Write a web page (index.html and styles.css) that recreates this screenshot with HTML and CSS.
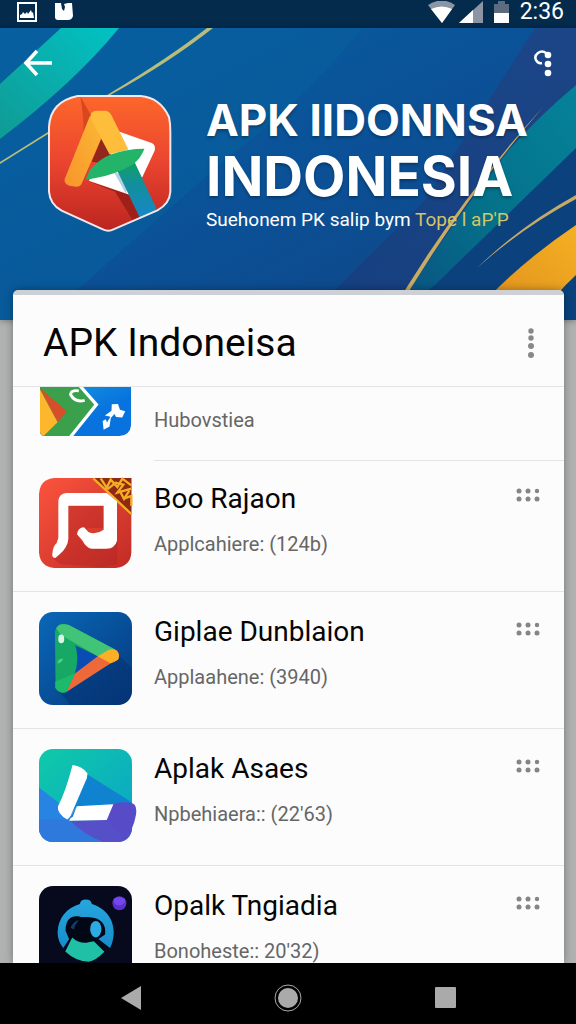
FILE: index.html
```html
<!DOCTYPE html>
<html lang="id">
<head>
  <meta charset="UTF-8" />
  <meta name="viewport" content="width=device-width, initial-scale=1.0" />
  <title>APK Indonesia</title>
  <link rel="stylesheet" href="styles.css">
</head>
<body>
  <div class="status-bar">
    <div class="status-left">
      <svg width="20" height="20" viewBox="0 0 20 20"><path d="M1 1h18v18H1z" fill="none" stroke="#fff" stroke-width="2"/><path d="M3 16v-3l2-1 1-2 2 2 2-2 1 2 3-4 1 3 1-1 1 6z" fill="#fff"/></svg>
      <svg width="20" height="20" viewBox="0 0 20 20"><path d="M1 1h6l1 6 2 2 1-4-1-3 4-1h4l1 13q-1 4-5 4H4q-3 0-3-3z" fill="#fff"/></svg>
    </div>
    <div class="status-right">
      <svg class="wifi" width="28" height="22" viewBox="0 0 28 22"><path d="M0 4Q14-5 27 4L14 22z" fill="#8b95a3"/><path d="M3 8q11-5 21 0L14 22z" fill="#fff"/></svg>
      <svg class="signal" width="24" height="22" viewBox="0 0 24 22"><path d="M0 22L24 0v22z" fill="#8b95a3"/><path d="M0 22L14 9v13z" fill="#fff"/></svg>
      <svg class="battery" width="15" height="22" viewBox="0 0 15 22"><path d="M0 3h4V0h7v3h4v9H0z" fill="#5d6b80"/><path d="M0 12h15v10H0z" fill="#fff"/></svg>
      <span class="time">2:36</span>
    </div>
  </div>

  <header class="hero">
    <svg class="hero-art" viewBox="0 28 576 292" preserveAspectRatio="none">
      <defs>
        <linearGradient id="sea" x1="0" y1="0" x2="1" y2="1"><stop offset="0" stop-color="#0661a5"/><stop offset=".5" stop-color="#0b5197"/><stop offset="1" stop-color="#104383"/></linearGradient>
        <linearGradient id="teal" x1="1" y1="0" x2="0" y2="1"><stop offset="0" stop-color="#02c2c4"/><stop offset="1" stop-color="#109a94"/></linearGradient>
        <linearGradient id="teal2" x1="1" y1="0" x2="0" y2="1"><stop offset="0" stop-color="#05829a"/><stop offset=".5" stop-color="#04718a"/><stop offset="1" stop-color="#0b4d80"/></linearGradient>
        <linearGradient id="gold" x1="1" y1="0" x2="0" y2="1"><stop offset="0" stop-color="#f5b023"/><stop offset="1" stop-color="#dc8b1c"/></linearGradient>
        <linearGradient id="dusk" x1="1" y1="0" x2="0" y2="1"><stop offset="0" stop-color="#22407f" stop-opacity=".7"/><stop offset="1" stop-color="#183c7b" stop-opacity=".7"/></linearGradient>
      </defs>
      <path d="M0 28h576v292H0z" fill="url(#sea)"/>
      <path d="M0 28h362Q310 95 225 160L77 290v30H0z" fill="#075f9d" opacity=".65"/>
      <path d="M576 28v292H310l25-30 90-90 110-172z" fill="url(#dusk)"/>
      <path d="M61 28h58Q75 82 0 139V84z" fill="url(#teal)"/>
      <path d="M207 28h6Q170 62 112 94L0 164v-2L112 92Q170 57 207 28z" fill="#b9bd7c"/>
      <path d="M576 85v75L450 270l-40 50h-20Q440 240 508 151 537 118 576 85z" fill="url(#teal2)"/>
      <path d="M576 148v172H390l45-35z" fill="#0b427d"/>
      <path d="M543 107Q455 210 392 320l-4-1Q450 210 543 107z" fill="#c9ac62"/>
      <path d="M576 195v4Q520 229 476 269 520 226 576 195z" fill="#c6aa68"/>
      <path d="M576 225v50q-22 20-38 45h-70q44-52 108-95z" fill="url(#gold)"/>
    </svg>
    <button class="icon-btn back" aria-label="Back">
      <svg width="30" height="28" viewBox="0 0 30 28"><path d="M28 14H3M13 2L2 14l11 12" fill="none" stroke="#fff" stroke-width="3.5"/></svg>
    </button>
    <button class="icon-btn options" aria-label="Options">
      <svg width="18" height="28" viewBox="0 0 18 28"><path d="M12 3Q8 0 4 3T2 10q2 4 6 3" fill="none" stroke="#fff" stroke-width="2.5"/><g fill="#fff"><circle cx="14" cy="5" r="3.3"/><circle cx="14" cy="14" r="3.3"/><circle cx="14" cy="23" r="3.3"/></g></svg>
    </button>
    <div class="brand">
      <svg class="brand-logo" viewBox="140 282 376 416">
        <defs>
          <linearGradient id="shield" x1="0" y1="0" x2="0" y2="1"><stop offset="0" stop-color="#fd672a"/><stop offset=".5" stop-color="#ea4430"/><stop offset="1" stop-color="#bb251f"/></linearGradient>
          <linearGradient id="amber" x1="1" y1="0" x2="0" y2="1"><stop offset="0" stop-color="#fbb835"/><stop offset="1" stop-color="#f8942b"/></linearGradient>
          <linearGradient id="leg" x1="0" y1="0" x2="0" y2="1"><stop offset="0" stop-color="#10a15f"/><stop offset=".4" stop-color="#128f9c"/><stop offset="1" stop-color="#1786c9"/></linearGradient>
          <clipPath id="shieldClip"><path d="M232 287H422Q480 292 507 350 511 368 511 395V575Q509 611 472 631L340 688Q325 696 308 688L184 632Q149 613 146 575V380Q150 304 232 287z"/></clipPath>
        </defs>
        <path d="M232 287H422Q480 292 507 350 511 368 511 395V575Q509 611 472 631L340 688Q325 696 308 688L184 632Q149 613 146 575V380Q150 304 232 287z" fill="url(#shield)"/>
        <g clip-path="url(#shieldClip)">
          <path d="M240 287L272 345 250 400Q250 345 240 287z" fill="#d9471f"/>
          <path d="M268 545L386 583 420 655 400 665 345 575z" fill="#9f2019"/>
          <path d="M356 394L455 428Q468 435 464 451L428 528 386 583 266 542z" fill="#fff"/>
          <path d="M340 513L377 580 392 540z" fill="#b2cfe3"/>
          <path d="M303 415L332 463 310 490 275 485z" fill="#94271b"/>
          <path d="M270 345L303 415 245 549Q242 560 227 560L207 557Q190 550 193 537z" fill="url(#amber)"/>
          <path d="M272 340Q277 331 291 331L318 331Q329 334 335 347L385 448 328 462 272 357z" fill="#ffbd3c"/>
          <path d="M347 503L401 480 469 625 459 640 420 655z" fill="url(#leg)"/>
          <path d="M256 539L270 507Q300 475 332 463 380 446 433 446 422 476 399 492 350 523 275 536z" fill="#23b46a"/>
        </g>
        <path d="M232 287H422Q480 292 507 350 511 368 511 395V575Q509 611 472 631L340 688Q325 696 308 688L184 632Q149 613 146 575V380Q150 304 232 287z" fill="none" stroke="#f2e8ed" stroke-width="6"/>
      </svg>
      <div class="brand-text">
        <div class="brand-top">APK IIDONNSA</div>
        <div class="brand-name">INDONESIA</div>
        <div class="tagline">Suehonem PK salip bym <span>Tope l aP'P</span></div>
      </div>
    </div>
  </header>

  <main class="card">
    <div class="card-header">
      <h1>APK Indoneisa</h1>
      <button class="icon-btn" aria-label="More">
        <svg width="8" height="30" viewBox="0 0 8 30" fill="#888"><circle cx="4" cy="3" r="2.7"/><circle cx="4" cy="10" r="2.7"/><circle cx="4" cy="18" r="3"/><circle cx="4" cy="27" r="3"/></svg>
      </button>
    </div>

    <ul class="app-list">
      <li class="app partial">
        <svg class="app-icon" viewBox="117 197 279 150">
          <defs><linearGradient id="mapBlue" x1="0" y1="0" x2="1" y2="1"><stop offset="0" stop-color="#159bda"/><stop offset=".6" stop-color="#0873df"/></linearGradient><clipPath id="mapClip"><path d="M117 197H396V312Q394 345 360 347H130Q117 346 117 330z"/></clipPath></defs>
          <g clip-path="url(#mapClip)">
            <path d="M117 197H396V347H117z" fill="url(#mapBlue)"/>
            <path d="M117 197H238L290 251 212 347H117z" fill="#3ba04b"/>
            <path d="M117 201L200 271 171 305z" fill="#d64f2a"/>
            <path d="M117 204L171 305 128 347H117z" fill="#fcb72c"/>
            <path d="M240 194L290 251 211 349" fill="none" stroke="#fff" stroke-width="10"/>
            <path d="M236 209Q211 205 211 221 225 246 254 238" fill="none" stroke="#fff" stroke-width="9"/>
            <path d="M337 250L356 249 362 267 378 271 369 290 350 289 345 280 334 292 330 318 312 328 309 301 319 296 322 306 333 288 316 284 336 270z" fill="#fff"/>
          </g>
        </svg>
        <div class="app-text">
          <p>Hubovstiea</p>
        </div>
      </li>

      <li class="app compact">
        <svg class="app-icon" viewBox="57 52 279 270">
          <defs><linearGradient id="red" x1="0" y1="0" x2="1" y2="1"><stop offset="0" stop-color="#fb543e"/><stop offset="1" stop-color="#c12b25"/></linearGradient></defs>
          <path d="M103 52H334V275Q332 318 286 322H103Q60 319 57 275V100Q60 55 103 52z" fill="url(#red)"/>
          <path d="M144 136H250V202L205 202 170 220 190 250 215 264 276 264 292 240V310L250 320 120 310 97 292 144 250z" fill="#a51f20" opacity=".3"/>
          <path d="M218 52H334V162Z" fill="#8f2912"/>
          <path d="M220 53L334 160M242 53l18 28 12-24 20 22 15-25 27 20M262 86l25-20 23 6-18 24 42-12M300 92l12 23 16-25M314 113l20-7v30" fill="none" stroke="#f3ae25" stroke-width="7"/>
          <path d="M115 119Q118 99 138 97H260L291 122V240Q285 263 259 264H215Q198 261 188 240L171 221Q173 201 192 200L205 214Q227 224 251 207V135H145V235Q143 260 119 281L106 292Q96 292 97 280 98 257 110 247L115 232z" fill="#fff"/>
        </svg>
        <div class="app-text">
          <h2>Boo Rajaon</h2>
          <p>Applcahiere: (124b)</p>
        </div>
        <button class="icon-btn grip" aria-label="Boo Rajaon options">
          <svg width="26" height="14" viewBox="0 0 26 14" fill="#858585"><circle cx="4" cy="3" r="2.5"/><circle cx="13" cy="3" r="2.5"/><circle cx="22" cy="3" r="2.2"/><circle cx="4" cy="11" r="2.5"/><circle cx="13" cy="11" r="2.5"/><circle cx="22" cy="11" r="2.5"/></svg>
        </button>
      </li>

      <li class="app">
        <svg class="app-icon" viewBox="55 35 280 280">
          <defs><linearGradient id="blue" x1="0" y1="0" x2="1" y2="1"><stop offset="0" stop-color="#0968b8"/><stop offset="1" stop-color="#05387c"/></linearGradient></defs>
          <rect x="55" y="35" width="280" height="280" rx="42" fill="url(#blue)"/>
          <path d="M135 280L295 165 335 205V275Q330 312 290 315H150L110 270z" fill="#042f70" opacity=".5"/>
          <path d="M173 145L235 168 163 220z" fill="#0b4cb4"/>
          <path d="M103 95Q106 70 130 70L145 74 284 148 232 168 164 135Q185 197 137 276 120 283 105 265z" fill="#17a866"/>
          <path d="M107 85Q116 66 145 74L284 148 232 168 122 105z" fill="#41c478"/>
          <path d="M232 168L284 148Q299 155 295 174 292 182 270 190L137 276 163 220z" fill="#ee693a"/>
          <path d="M232 168L263 150Q275 144 288 150 301 163 293 179L270 189z" fill="#fbb026"/>
          <path d="M104 245L163 220 137 276Q116 282 104 262z" fill="#1cba6b"/>
          <ellipse cx="122" cy="116" rx="9" ry="13" fill="#d8f5e6"/>
          <path d="M110 190q12 0 18-14-15-3-18 14z" fill="#4ad18a"/>
        </svg>
        <div class="app-text">
          <h2>Giplae Dunblaion</h2>
          <p>Applaahene: (3940)</p>
        </div>
        <button class="icon-btn grip" aria-label="Giplae Dunblaion options">
          <svg width="26" height="14" viewBox="0 0 26 14" fill="#858585"><circle cx="4" cy="3" r="2.5"/><circle cx="13" cy="3" r="2.5"/><circle cx="22" cy="3" r="2.2"/><circle cx="4" cy="11" r="2.5"/><circle cx="13" cy="11" r="2.5"/><circle cx="22" cy="11" r="2.5"/></svg>
        </button>
      </li>

      <li class="app">
        <svg class="app-icon" viewBox="54 29 280 280">
          <defs><linearGradient id="mint" x1="0" y1="0" x2="1" y2="1"><stop offset="0" stop-color="#0fcaa8"/><stop offset="1" stop-color="#0ba2c9"/></linearGradient><clipPath id="mintClip"><rect x="54" y="29" width="280" height="280" rx="42"/></clipPath></defs>
          <g clip-path="url(#mintClip)">
            <path d="M54 29H334V309H54z" fill="url(#mint)"/>
            <path d="M54 145L112 190 145 240 235 309H54z" fill="#2784e2"/>
            <path d="M199 105L334 190V240H145z" fill="#0f83cf"/>
            <path d="M145 245L262 242 334 205V309H245Q190 288 145 245z" fill="#5550c7"/>
            <path d="M54 240L145 243Q190 288 245 309H54z" fill="#2f79dd"/>
          </g>
          <path d="M275 195Q305 185 337 193 350 200 346 227 338 274 311 302L257 242z" fill="#584bc7"/>
          <path d="M155 77Q185 80 200 103L198 117 148 233 139 241Q108 224 111 202 134 158 155 77z" fill="#fff"/>
          <path d="M168 201L278 195Q268 218 258 243L145 245 153 225z" fill="#fff"/>
          <path d="M143 242L168 201 156 232z" fill="#1b76ce"/>
        </svg>
        <div class="app-text">
          <h2>Aplak Asaes</h2>
          <p>Npbehiaera:: (22'63)</p>
        </div>
        <button class="icon-btn grip" aria-label="Aplak Asaes options">
          <svg width="26" height="14" viewBox="0 0 26 14" fill="#858585"><circle cx="4" cy="3" r="2.5"/><circle cx="13" cy="3" r="2.5"/><circle cx="22" cy="3" r="2.2"/><circle cx="4" cy="11" r="2.5"/><circle cx="13" cy="11" r="2.5"/><circle cx="22" cy="11" r="2.5"/></svg>
        </button>
      </li>

      <li class="app">
        <svg class="app-icon" viewBox="55 50 280 280">
          <defs><linearGradient id="cyan" x1="0" y1="0" x2="0" y2="1"><stop offset="0" stop-color="#27a6dd"/><stop offset="1" stop-color="#168dcc"/></linearGradient></defs>
          <rect x="55" y="50" width="280" height="280" rx="42" fill="#060a1c"/>
          <path d="M178 104Q180 91 196 91T214 104C251 115 280 145 280 190Q280 214 269 237L232 208Q246 185 239 163C227 137 165 136 146 163Q136 187 147 208L128 237Q111 215 111 190C112 146 139 115 178 104z" fill="url(#cyan)"/>
          <path d="M135 185C135 137 166 136 190 146 240 139 258 164 254 196L222 218 190 224 160 205 147 213z" fill="#020716"/>
          <path d="M150 176q7-20 25-24-11 13-15 29z" fill="#133b67"/>
          <ellipse cx="226" cy="180" rx="17" ry="25" fill="#2cabe2"/>
          <path d="M155 205Q172 222 197 221L220 216 252 248Q224 276 205 278 166 277 134 247z" fill="#20c0a6"/>
          <circle cx="297" cy="102" r="21" fill="#5a31cf"/>
          <path d="M280 99q15 20 34 0v-10q-18-12-34 0z" fill="#7446ec"/>
        </svg>
        <div class="app-text">
          <h2>Opalk Tngiadia</h2>
          <p>Bonoheste:: 20'32)</p>
        </div>
        <button class="icon-btn grip" aria-label="Opalk Tngiadia options">
          <svg width="26" height="14" viewBox="0 0 26 14" fill="#858585"><circle cx="4" cy="3" r="2.5"/><circle cx="13" cy="3" r="2.5"/><circle cx="22" cy="3" r="2.2"/><circle cx="4" cy="11" r="2.5"/><circle cx="13" cy="11" r="2.5"/><circle cx="22" cy="11" r="2.5"/></svg>
        </button>
      </li>
    </ul>
  </main>

  <nav class="nav-bar">
    <button class="icon-btn" aria-label="Back">
      <svg width="20" height="26" viewBox="0 0 20 26"><path d="M20 1v24L0 13z" fill="#aaa"/></svg>
    </button>
    <button class="icon-btn" aria-label="Home">
      <svg width="28" height="28" viewBox="0 0 28 28"><circle cx="14" cy="14" r="13" fill="none" stroke="#aaa"/><circle cx="14" cy="14" r="10" fill="#aaa"/></svg>
    </button>
    <button class="icon-btn" aria-label="Recent apps">
      <svg width="21" height="21" viewBox="0 0 21 21"><rect width="21" height="21" rx="1" fill="#aaa"/></svg>
    </button>
  </nav>
</body>
</html>
```
FILE: styles.css
```css
* {
  box-sizing: border-box;
}
body {
  margin: 0;
  height: 100vh;
  display: flex;
  flex-direction: column;
  overflow: hidden;
  background: #b0b1b1;
  font-family: Roboto, sans-serif;
  color: #050505;
}
h1, h2, p, ul {
  margin: 0;
  padding: 0;
  font-weight: 400;
}
svg {
  display: block;
}
.icon-btn {
  display: block;
  padding: 0;
  border: none;
  background: none;
  cursor: pointer;
}

/* status bar */
.status-bar {
  flex: none;
  height: 28px;
  padding: 0 12px 5px 17px;
  display: flex;
  justify-content: space-between;
  align-items: center;
  background: #042b4c;
  color: #fff;
}
.status-left {
  display: flex;
  gap: 17px;
}
.status-right {
  display: flex;
  align-items: center;
}
.signal {
  margin-left: 3px;
}
.battery {
  margin: 0 11px 0 11px;
}
.time {
  font-size: 23px;
  line-height: 22px;
}

/* hero */
.hero {
  flex: none;
  position: relative;
  height: 292px;
  box-shadow: 0 1px 6px rgba(0, 0, 0, 0.3);
}
.hero-art {
  position: absolute;
  width: 100%;
  height: 100%;
}
.back {
  position: absolute;
  top: 21px;
  left: 24px;
}
.options {
  position: absolute;
  top: 22px;
  right: 24px;
}
.brand {
  position: relative;
  display: flex;
  gap: 34px;
  padding: 66px 12px 0 47px;
}
.brand-logo {
  flex: none;
  width: 125px;
  height: 139px;
}
.brand-text {
  color: #fff;
  font-family: Inter, sans-serif;
  font-weight: 700;
  white-space: nowrap;
}
.brand-top {
  font-size: 44px;
  line-height: 52px;
  text-shadow: 0 2px 3px rgba(0, 0, 0, 0.3);
}
.brand-name {
  font-size: 55px;
  line-height: 60px;
  text-shadow: 0 2px 3px rgba(0, 0, 0, 0.3);
}
.tagline {
  font-family: Roboto, sans-serif;
  font-size: 19px;
  font-weight: 400;
  line-height: 28px;
}
.tagline span {
  color: #d3c568;
}

/* card */
.card {
  flex: 1;
  min-height: 0;
  position: relative;
  display: flex;
  flex-direction: column;
  margin: -30px 12px 0 13px;
  overflow: hidden;
  border-top: 5px solid #cdd1d6;
  border-radius: 5px 5px 0 0;
  background: #fcfcfc;
  box-shadow: 0 0 8px rgba(0, 0, 0, 0.35);
}
.card-header {
  flex: none;
  display: flex;
  justify-content: space-between;
  align-items: center;
  height: 91px;
  padding: 4px 29px 0 30px;
}
h1 {
  font-size: 39px;
  line-height: 48px;
}
.app-list {
  list-style: none;
}
.app {
  display: flex;
  gap: 22px;
  align-items: flex-start;
  padding: 20px 23px 23px 26px;
  border-top: 1px solid #e3e4e5;
}
.app-icon {
  flex: none;
  width: 93px;
  height: 93px;
  overflow: visible;
}
.app-text {
  flex: 1;
  padding-top: 2px;
}
.app h2 {
  font-size: 28px;
  line-height: 36px;
}
.app p {
  margin-top: 16px;
  color: #666;
  font-size: 20px;
  line-height: 22px;
}
.grip {
  margin-top: 10px;
}

/* first row is scrolled under the header */
.partial {
  padding-top: 0;
  padding-right: 0;
  padding-bottom: 0;
}
.partial .app-icon {
  height: 49px;
}
.partial .app-text {
  height: 74px;
  padding-top: 6px;
  border-bottom: 1px solid #e3e4e5;
}
.compact {
  padding-top: 17px;
  border-top: none;
}
.compact .app-icon {
  height: 90px;
}
.compact .app-text {
  padding-top: 3px;
}

/* android buttons */
.nav-bar {
  flex: none;
  position: relative;
  height: 61px;
  display: flex;
  justify-content: center;
  align-items: center;
  gap: 133px;
  padding-top: 8px;
  background: #000;
}
```
